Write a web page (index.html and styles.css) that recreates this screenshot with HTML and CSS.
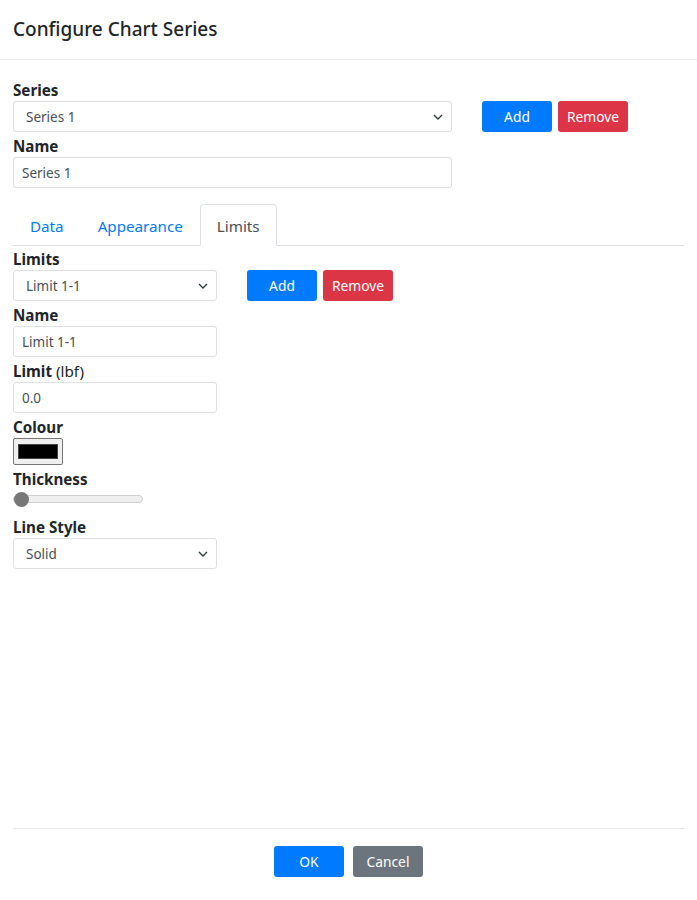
FILE: index.html
```html
<!DOCTYPE html>
<html lang="en">
<head>
<meta charset="utf-8">
<title>Configure Chart Series</title>
<link rel="stylesheet" href="styles.css">
</head>
<body>
<div class="dialog">
  <header class="dlg-header">
    <h5 class="dlg-title">Configure Chart Series</h5>
  </header>
  <main class="dlg-body">
    <label class="lbl">Series</label>
    <div class="row">
      <div class="select-wrap wide">
        <select class="ctl select"><option>Series 1</option></select>
        <svg class="chev" width="10" height="6" viewBox="0 0 10 6"><path d="M1 1l4 4 4-4" fill="none" stroke="#343a40" stroke-width="1.4"/></svg>
      </div>
      <div class="btns">
        <button class="btn blue">Add</button>
        <button class="btn red">Remove</button>
      </div>
    </div>
    <label class="lbl">Name</label>
    <input class="ctl input wide" type="text" value="Series 1">

    <nav class="tabs">
      <a class="tab">Data</a>
      <a class="tab">Appearance</a>
      <a class="tab active">Limits</a>
    </nav>

    <label class="lbl">Limits</label>
    <div class="row">
      <div class="select-wrap narrow">
        <select class="ctl select"><option>Limit 1-1</option></select>
        <svg class="chev" width="10" height="6" viewBox="0 0 10 6"><path d="M1 1l4 4 4-4" fill="none" stroke="#343a40" stroke-width="1.4"/></svg>
      </div>
      <div class="btns">
        <button class="btn blue">Add</button>
        <button class="btn red">Remove</button>
      </div>
    </div>
    <label class="lbl">Name</label>
    <input class="ctl input narrow" type="text" value="Limit 1-1">
    <label class="lbl">Limit <span class="unit">(lbf)</span></label>
    <input class="ctl input narrow" type="text" value="0.0">
    <label class="lbl">Colour</label>
    <div class="swatch"><span class="swatch-fill"></span></div>
    <label class="lbl">Thickness</label>
    <input class="range" type="range" min="1" max="10" value="1">
    <label class="lbl">Line Style</label>
    <div class="select-wrap narrow">
      <select class="ctl select"><option>Solid</option></select>
      <svg class="chev" width="10" height="6" viewBox="0 0 10 6"><path d="M1 1l4 4 4-4" fill="none" stroke="#343a40" stroke-width="1.4"/></svg>
    </div>
  </main>
  <footer class="dlg-footer">
    <button class="btn blue">OK</button>
    <button class="btn gray">Cancel</button>
  </footer>
</div>
</body>
</html>
```
FILE: styles.css
```css
* { box-sizing: border-box; }
html, body { margin: 0; padding: 0; }
body {
  font-family: "Noto Sans", "Open Sans", sans-serif;
  color: #212529;
  background: #fff;
}
.dialog {
  display: flex;
  flex-direction: column;
  height: 900px;
}
.dlg-header {
  height: 60px;
  padding: 0 13px;
  border-bottom: 1px solid #e5e7ea;
  display: flex;
  align-items: center;
}
.dlg-title {
  margin: 0 0 1px;
  font-size: 19px;
  font-weight: 500;
  line-height: 30px;
}
.dlg-body {
  padding: 17px 13px 0;
  display: flex;
  flex-direction: column;
  align-items: flex-start;
}
.lbl {
  display: block;
  font-size: 15.2px;
  font-weight: 700;
  line-height: 24px;
  padding-top: 1px;
  margin-bottom: -1px;
}
.unit { font-weight: 400; }
.row {
  display: flex;
  align-items: flex-start;
  width: 100%;
}
.wide { width: 439px; }
.narrow { width: 204px; }
.ctl {
  height: 31px;
  margin: 0;
  border: 1px solid #dde1e5;
  border-radius: 3px;
  font-family: inherit;
  font-size: 13.5px;
  color: #495057;
  background: #fff;
  outline: none;
}
.input {
  padding: 0 8px;
  margin-bottom: 1px;
}
.select-wrap {
  position: relative;
  margin-bottom: 1px;
}
.select {
  width: 100%;
  -webkit-appearance: none;
  appearance: none;
  padding: 0 24px 0 12px;
}
.chev {
  position: absolute;
  right: 9px;
  top: 13px;
  pointer-events: none;
}
.btns {
  display: flex;
  gap: 6px;
  margin-left: 30px;
}
.btn {
  width: 70px;
  height: 31px;
  padding: 0;
  border: 0;
  border-radius: 3px;
  font-family: inherit;
  font-size: 13.8px;
  color: #fff;
}
.blue { background: #007bff; }
.red { background: #dc3545; }
.gray { background: #6c757d; }

.tabs {
  display: flex;
  width: 100%;
  margin-top: 15px;
  border-bottom: 1px solid #dee2e6;
}
.tab {
  margin-bottom: -1px;
  padding: 9px 16px 7px;
  border: 1px solid transparent;
  border-radius: 4px 4px 0 0;
  font-size: 15.2px;
  line-height: 24px;
  color: #007bff;
}
.tab.active {
  color: #495057;
  background: #fff;
  border-color: #dee2e6 #dee2e6 #fff;
}

.swatch {
  width: 50px;
  height: 27px;
  padding: 5px 4px;
  border: 1px solid #767676;
  border-radius: 2px;
  background: #efefef;
  margin-bottom: 1px;
}
.swatch-fill {
  display: block;
  height: 100%;
  background: #000;
  border: 1px solid #444;
}
.range {
  -webkit-appearance: none;
  appearance: none;
  width: 130px;
  height: 18px;
  margin: 0 0 6px;
  background: transparent;
}
.range::-webkit-slider-runnable-track {
  height: 8px;
  border: 1px solid #cfcfcf;
  border-radius: 4px;
  background: #efefef;
}
.range::-webkit-slider-thumb {
  -webkit-appearance: none;
  width: 15px;
  height: 15px;
  margin-top: -4.5px;
  border-radius: 50%;
  background: #777;
  border: 0;
}

.dlg-footer {
  margin: auto 13px 0;
  border-top: 1px solid #e5e7ea;
  padding: 17px 0 23px;
  display: flex;
  justify-content: center;
  gap: 9px;
}
```
